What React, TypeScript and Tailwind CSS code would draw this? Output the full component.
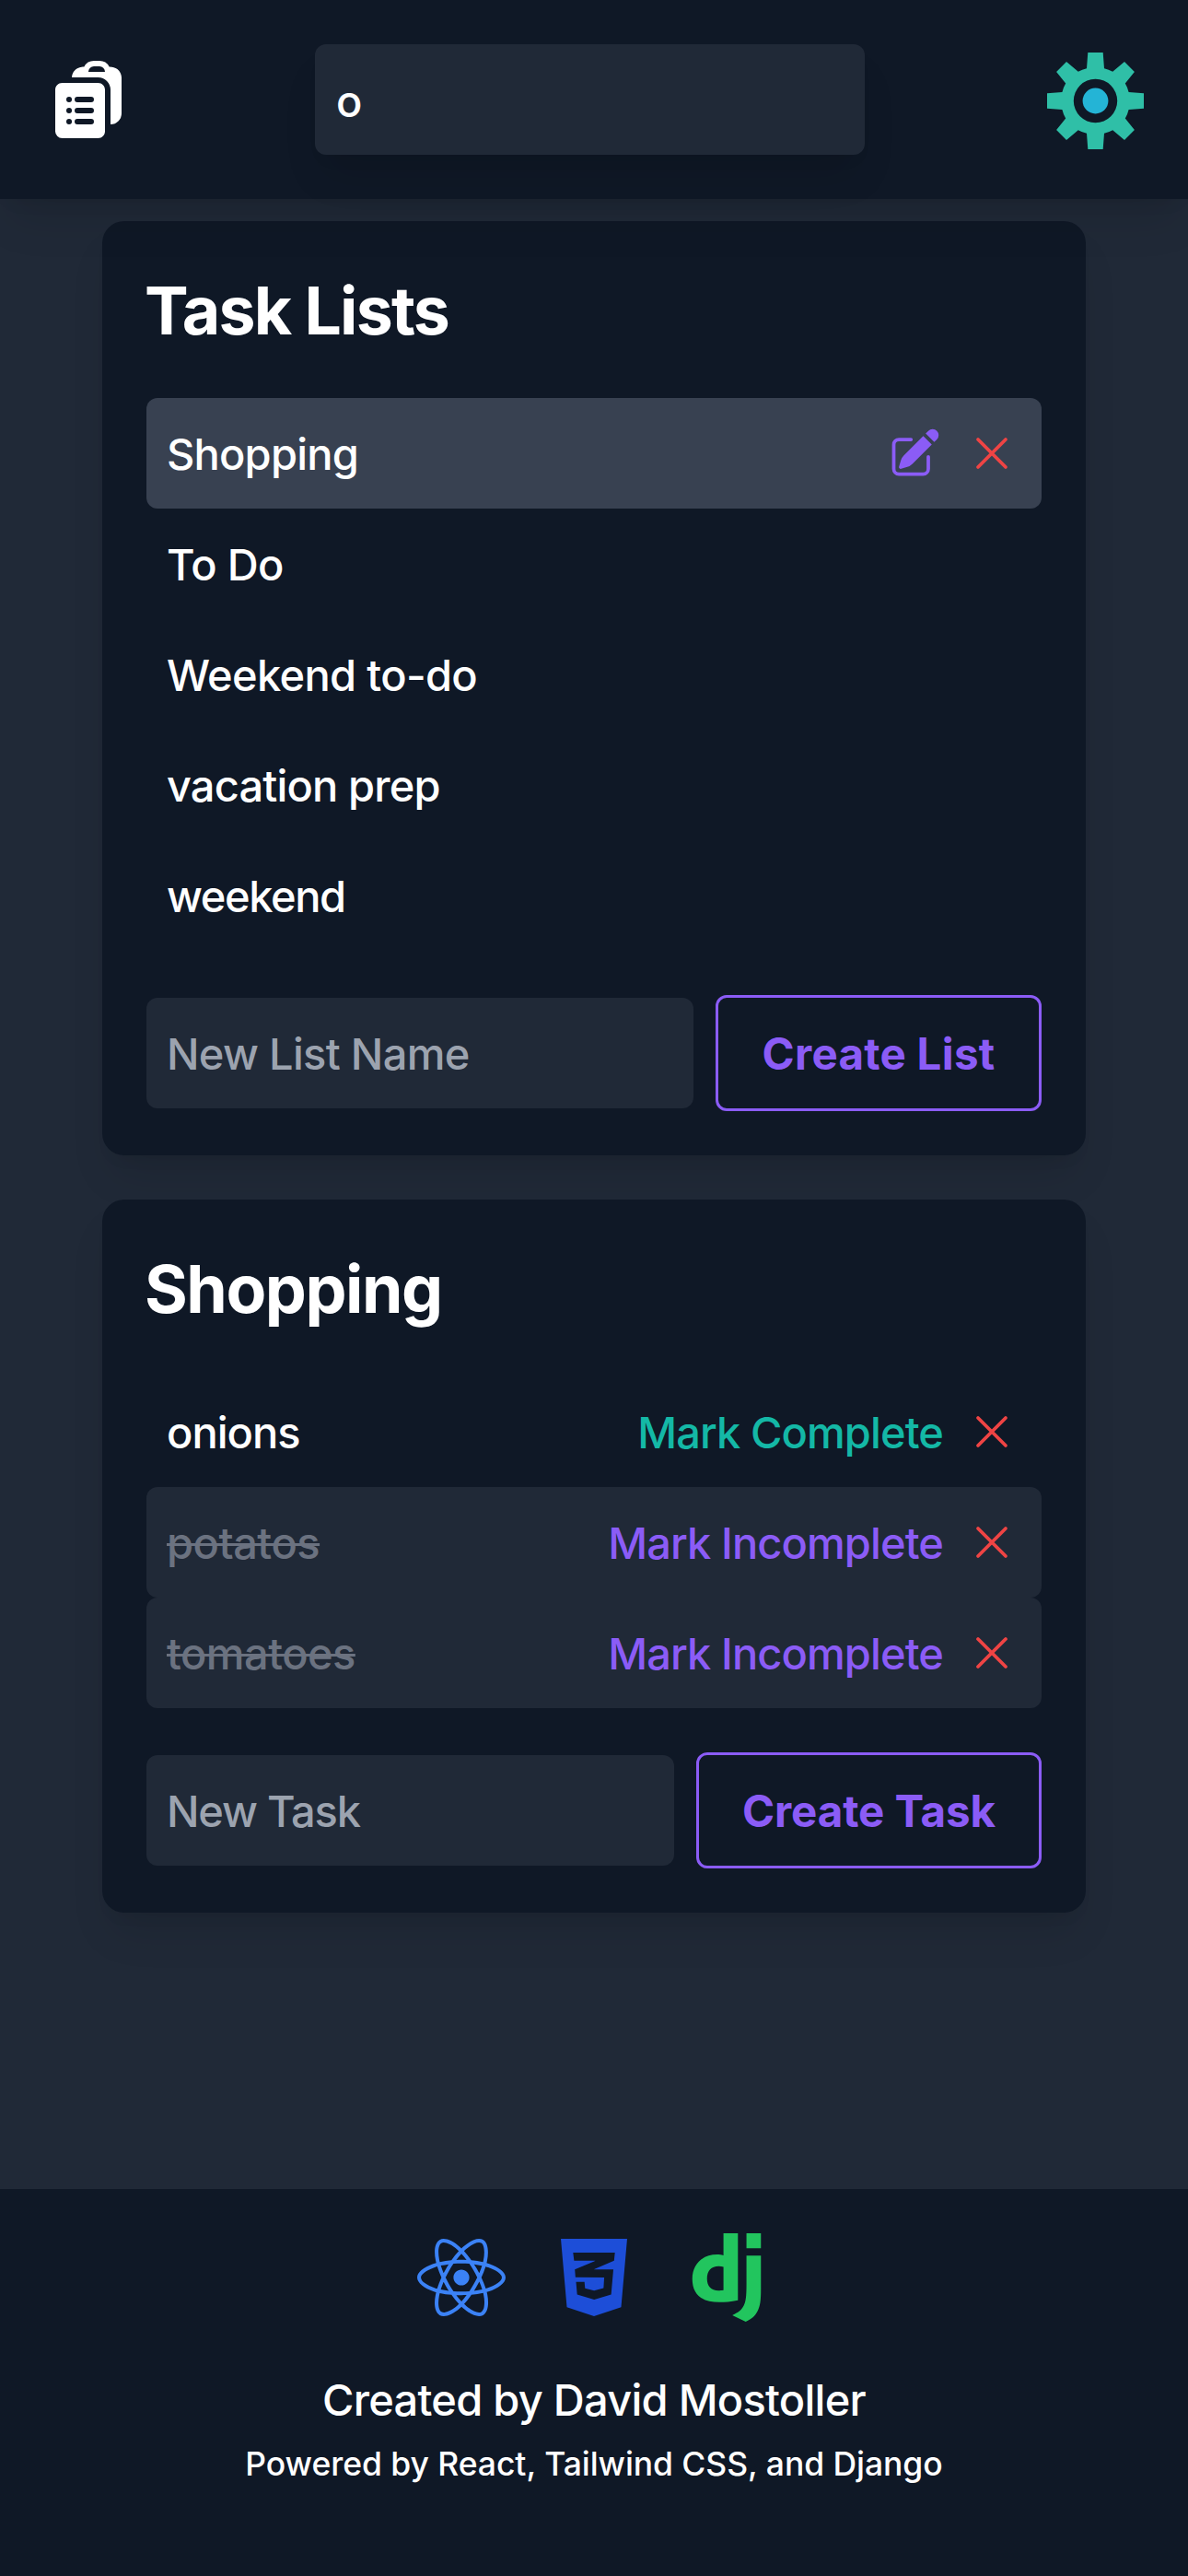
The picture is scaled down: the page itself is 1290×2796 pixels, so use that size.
import { FaCss3Alt, FaReact } from "react-icons/fa";
import { HiClipboardDocumentList, HiOutlineXMark, HiPencilSquare } from "react-icons/hi2";
import { SiDjango } from "react-icons/si";

const shadow =
  "shadow-[0_30px_45px_-9px_rgba(0,0,0,0.1),0_12px_18px_-12px_rgba(0,0,0,0.1)]";

const lists = [
  { name: "Shopping", active: true, tracking: "tracking-[-0.8px]" },
  { name: "To Do", active: false, tracking: "tracking-[-0.7px]" },
  { name: "Weekend to-do", active: false, tracking: "tracking-[-0.67px]" },
  { name: "vacation prep", active: false, tracking: "tracking-[-0.85px]" },
  { name: "weekend", active: false, tracking: "tracking-[-1.4px]" },
];

const tasks = [
  { name: "onions", done: false, tracking: "tracking-[-1px]" },
  { name: "potatos", done: true, tracking: "tracking-[-0.5px]" },
  { name: "tomatoes", done: true, tracking: "tracking-[-0.55px]" },
];

function GearIcon() {
  return (
    <svg viewBox="0 0 105 105" className="size-[105px]">
      <path
        fill="#2fbfa7"
        fillRule="evenodd"
        d="M44.3 0H60.7L62 17.2Q66.9 18.4 71.2 20.8L84 10.1L94.9 21L84.8 33.4Q87.4 37.8 88.6 43L105 44.3V60.7L88.6 62Q87.4 67.2 84.8 71.6L94.9 84L84 94.9L71.2 84.2Q66.9 86.6 62 87.8L60.7 105H44.3L43 87.8Q38.1 86.6 33.8 84.2L21 94.9L10.1 84L20.2 71.6Q17.6 67.2 16.4 62L0 60.7V44.3L16.4 43Q17.6 37.8 20.2 33.4L10.1 21L21 10.1L33.8 20.8Q38.1 18.4 43 17.2ZM52.5 28.8A23.7 23.7 0 1 0 52.5 76.2A23.7 23.7 0 1 0 52.5 28.8Z"
      />
      <circle cx="52.5" cy="52.5" r="13.9" fill="#24b4d6" />
    </svg>
  );
}

function Header() {
  return (
    <header
      className={`relative z-10 flex h-[216px] shrink-0 items-center justify-between bg-[#0f1826] px-12 ${shadow}`}
    >
      <HiClipboardDocumentList className="size-24 text-white" />
      <input
        defaultValue="o"
        className={`h-[120px] w-[597px] rounded-xl bg-[#202937] pt-[3px] pr-6 pl-[23px] text-white outline-none ${shadow}`}
      />
      <div className="pt-[3px]">
        <GearIcon />
      </div>
    </header>
  );
}

function DeleteButton() {
  return (
    <button className="text-[#ef4444]" aria-label="Delete">
      <HiOutlineXMark className="size-[60px]" />
    </button>
  );
}

function CreateForm(props: {
  placeholder: string;
  label: string;
  inputClass: string;
  buttonClass: string;
}) {
  return (
    <form className="mt-12 flex items-center gap-6" onSubmit={(e) => e.preventDefault()}>
      <input
        placeholder={props.placeholder}
        className={`h-[120px] min-w-0 flex-1 rounded-xl bg-[#202937] pt-px pr-6 pl-[22px] text-white outline-none placeholder:text-[#9ca3af] ${props.inputClass}`}
      />
      <button
        className={`h-[126px] shrink-0 rounded-xl border-[3px] border-[#8b5cf6] pt-px text-[47.5px] font-bold whitespace-nowrap text-[#8b5cf6] ${props.buttonClass}`}
      >
        {props.label}
      </button>
    </form>
  );
}

export default function App() {
  return (
    <div className="flex h-[2796px] w-[1290px] flex-col bg-[#202937] font-[Inter,sans-serif] text-[47px] leading-[72px] font-medium text-white">
      <Header />

      <main className="flex flex-1 flex-col items-center gap-12 pt-6">
        <section className={`w-[1068px] rounded-3xl bg-[#0f1826] p-12 ${shadow}`}>
          <h2 className="-ml-0.5 mb-12 pt-0.5 text-[71.5px] leading-[94px] font-bold tracking-[-1.8px]">
            Task Lists
          </h2>
          <ul>
            {lists.map((list) => (
              <li
                key={list.name}
                className={`flex h-[120px] items-center justify-between rounded-xl pr-6 pl-[22px] ${list.active ? "bg-[#384151]" : ""}`}
              >
                <span className={`pt-px ${list.tracking}`}>{list.name}</span>
                {list.active && (
                  <div className="flex items-center gap-6">
                    <button className="text-[#8b5cf6]" aria-label="Rename">
                      <HiPencilSquare className="size-[60px]" />
                    </button>
                    <DeleteButton />
                  </div>
                )}
              </li>
            ))}
          </ul>
          <CreateForm
            placeholder="New List Name"
            label="Create List"
            inputClass="tracking-[-0.7px]"
            buttonClass="w-[354px] tracking-[0.28px]"
          />
        </section>

        <section className={`w-[1068px] rounded-3xl bg-[#0f1826] p-12 ${shadow}`}>
          <h2 className="-ml-0.5 mb-12 pt-0.5 text-[71.5px] leading-[94px] font-bold tracking-[-1.45px]">
            Shopping
          </h2>
          <ul>
            {tasks.map((task) => (
              <li
                key={task.name}
                className={`flex h-[120px] items-center justify-between rounded-xl pr-6 pl-[22px] ${task.done ? "bg-[#202937]" : ""}`}
              >
                <span
                  className={`pt-px ${task.tracking} ${task.done ? "text-[#6b7280] line-through decoration-[3px]" : ""}`}
                >
                  {task.name}
                </span>
                <div className="flex items-center gap-[23px]">
                  <button
                    className={`pt-px tracking-[-0.9px] ${task.done ? "text-[#8b5cf6]" : "text-[#14b8a6]"}`}
                  >
                    {task.done ? "Mark Incomplete" : "Mark Complete"}
                  </button>
                  <DeleteButton />
                </div>
              </li>
            ))}
          </ul>
          <CreateForm
            placeholder="New Task"
            label="Create Task"
            inputClass="tracking-[-1.2px]"
            buttonClass="w-[375px] tracking-[-0.1px]"
          />
        </section>
      </main>

      <footer className="flex h-[420px] shrink-0 flex-col items-center bg-[#0f1826] pt-12">
        <div className="flex gap-12">
          <FaReact className="size-24 text-[#3b82f6]" />
          <FaCss3Alt className="size-24 text-[#1d4ed8]" />
          <SiDjango className="size-24 text-[#22c55e]" />
        </div>
        <p className="mt-12 pt-px tracking-[-0.74px]">Created by David Mostoller</p>
        <p className="mt-[10px] text-[35.5px] leading-12 tracking-[-0.06px]">
          Powered by React, Tailwind CSS, and Django
        </p>
      </footer>
    </div>
  );
}
